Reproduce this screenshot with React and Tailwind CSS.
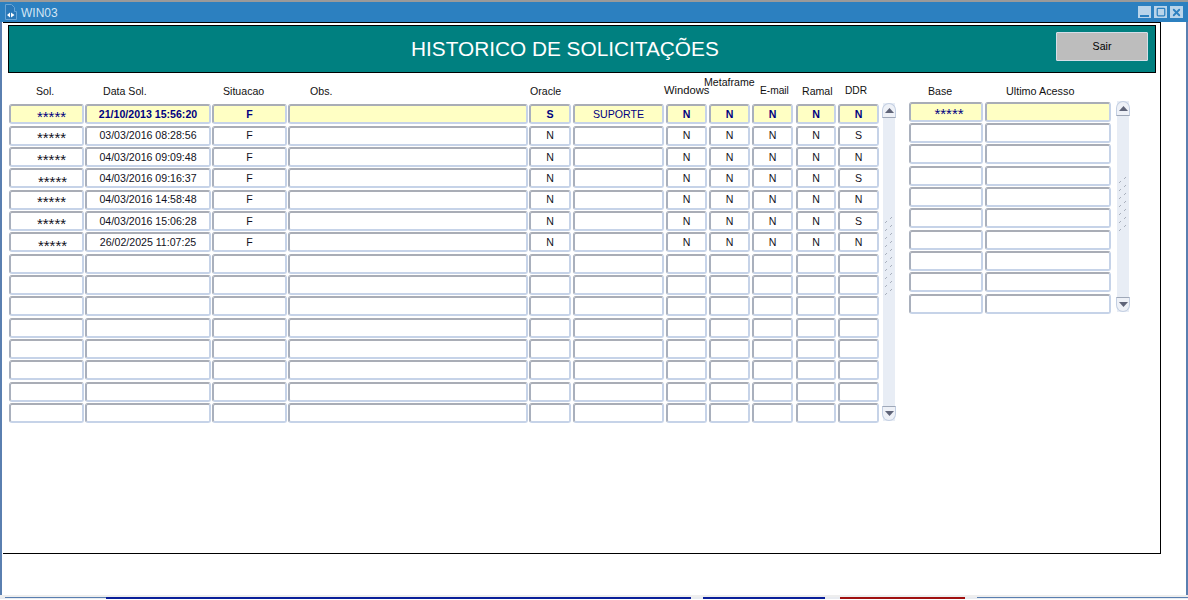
import React from "react";
import { Square, X } from "lucide-react";

const font = "font-['Liberation_Sans',Arial,sans-serif]";

// largura e margem de cada coluna da tabela principal
const colunas = [
  { w: "w-[75px]", ml: "ml-0" },
  { w: "w-[126px]", ml: "ml-[1px]" },
  { w: "w-[75px]", ml: "ml-[1px]" },
  { w: "w-[240px]", ml: "ml-[1px]" },
  { w: "w-[42px]", ml: "ml-[1px]" },
  { w: "w-[91px]", ml: "ml-[2px]" },
  { w: "w-[41px]", ml: "ml-[2px]" },
  { w: "w-[41px]", ml: "ml-[2px]" },
  { w: "w-[41px]", ml: "ml-[2px]" },
  { w: "w-[40px]", ml: "ml-[3px]" },
  { w: "w-[41px]", ml: "ml-[2px]" },
];

const dados = [
  ["*****", "21/10/2013 15:56:20", "F", "", "S", "SUPORTE", "N", "N", "N", "N", "N"],
  ["*****", "03/03/2016 08:28:56", "F", "", "N", "", "N", "N", "N", "N", "S"],
  ["*****", "04/03/2016 09:09:48", "F", "", "N", "", "N", "N", "N", "N", "N"],
  ["*****", "04/03/2016 09:16:37", "F", "", "N", "", "N", "N", "N", "N", "S"],
  ["*****", "04/03/2016 14:58:48", "F", "", "N", "", "N", "N", "N", "N", "N"],
  ["*****", "04/03/2016 15:06:28", "F", "", "N", "", "N", "N", "N", "N", "S"],
  ["*****", "26/02/2025 11:07:25", "F", "", "N", "", "N", "N", "N", "N", "N"],
];

const linhas = [...dados, ...Array(8).fill(Array(11).fill(""))];

const cabecalho = [
  { t: "Sol.", c: "w-[67px]" },
  { t: "Data Sol.", c: "w-[120px]" },
  { t: "Situacao", c: "w-[87px]" },
  { t: "Obs.", c: "w-[220px]" },
  { t: "Oracle", c: "w-[134px]" },
  { t: "Windows", c: "w-[40px] text-[11.2px]" },
  { t: "Metaframe", c: "w-[56px] mb-[9px]" },
  { t: "E-mail", c: "w-[42px] text-[10.2px]" },
  { t: "Ramal", c: "w-[43px]" },
  { t: "DDR", c: "w-[30px] text-[10.2px]" },
];

function Celula({ texto, selecionada, negrito, w, ml }) {
  return (
    <div
      className={`${w} ${ml} h-[20px] shrink-0 flex items-center justify-center rounded-[3px] border-2 border-t-[#a9adb6] border-l-[#a9b0bd] border-r-[#c6d3e8] border-b-[#c6d3e8] text-[10.6px] leading-none ${
        selecionada ? "bg-[#ffffc4] text-[#000080]" : "bg-white text-[#111122]"
      } ${negrito ? "font-bold" : ""}`}
    >
      {texto}
    </div>
  );
}

function Estrelas({ desloc }) {
  return <span className={`text-[15px] leading-none ${desloc}`}>*****</span>;
}

function BotaoScroll({ baixo }) {
  return (
    <div
      className={`w-[14px] h-[15px] -mx-[1px] shrink-0 flex items-center justify-center bg-[#eef1f7] border border-[#c3cfe2] ${
        baixo ? "rounded-b-[7px] border-t-[#9fa8b8]" : "rounded-t-[7px] border-b-[#9fa8b8]"
      }`}
    >
      <svg width="9" height="5" viewBox="0 0 9 5">
        <path d={baixo ? "M0 0h9L4.5 5z" : "M4.5 0L9 5H0z"} fill="#5f6478" />
      </svg>
    </div>
  );
}

// pontinhos do polegar da barra de rolagem
function Grip({ n }) {
  return (
    <div className="flex flex-col items-center">
      {Array.from({ length: n }).map((_, i) => (
        <svg key={i} width="8" height="8" viewBox="0 0 8 8" className="block">
          <path d="M6 0h1v1H6zM5 1h1v1H5zM1 4h1v1H1zM0 5h1v1H0z" fill="#a9b0bd" />
        </svg>
      ))}
    </div>
  );
}

function Scrollbar({ h, gripTop, n }) {
  return (
    <div className={`w-[12px] ${h} flex flex-col items-center bg-[#e8edf5]`}>
      <BotaoScroll />
      <div className={`flex-1 ${gripTop}`}>
        <Grip n={n} />
      </div>
      <BotaoScroll baixo />
    </div>
  );
}

export default function App() {
  return (
    <div className={`${font} relative w-[1188px] h-[600px] overflow-hidden bg-white text-black flex flex-col`}>
      <div className="h-[2px] bg-[#9a9a9a]" />
      <div className="h-[20px] bg-[#2c80c0] flex items-center pl-[5px] pr-[5px] text-white">
        <svg width="12" height="16" viewBox="0 0 12 16" className="mr-[4px]">
          <path d="M.5.5h6l3 3v4h2v8H.5z" fill="#2a78b8" stroke="#6aa5d6" />
          <path d="M2 11l3-2.5v5zM6 8.5l3.5 2.5L6 13.5z" fill="#fff" />
        </svg>
        <span className="text-[12px] leading-none pt-[1px] text-[#d3e5f5]">WIN03</span>
        <div className="ml-auto flex gap-[3px]">
          <div className="w-[13px] h-[12px] bg-[#b9d4ea] flex items-end justify-center pb-[1px]">
            <div className="w-[9px] h-[2px] bg-[#2c80c0]" />
          </div>
          <div className="w-[13px] h-[12px] bg-[#b9d4ea] flex items-center justify-center">
            <Square size={10} strokeWidth={3} className="text-[#2c80c0]" />
          </div>
          <div className="w-[13px] h-[12px] bg-[#b9d4ea] flex items-center justify-center">
            <X size={11} strokeWidth={4} className="text-[#2c80c0]" />
          </div>
        </div>
      </div>

      <div className="flex-1 border-x-2 border-x-[#5a7fb0] flex flex-col">
        <div className="ml-px w-[1158px] h-[532px] border-y border-r border-black pl-[5px] pt-[2px] flex flex-col">
          <div className="w-[1148px] h-[48px] shrink-0 border border-black bg-[#008080] flex items-center pr-[7px]">
            <h1 className="pl-[402px] text-[20.8px] font-normal text-white">HISTORICO DE SOLICITAÇÕES</h1>
            <button className="ml-auto self-start mt-[6px] w-[92px] h-[29px] bg-[#bdbdbd] border border-[#d5dee8] rounded-[1px] text-[10.6px] text-black">
              Sair
            </button>
          </div>

          <div className="flex pl-[1px]">
            <div className="w-[880px] shrink-0">
              <div className="h-[31.4px] flex items-end pb-[8px] pl-[27px] text-[10.6px] leading-none text-[#111]">
                {cabecalho.map((c, i) => (
                  <div key={i} className={`${c.c} shrink-0 whitespace-nowrap`}>
                    {c.t}
                  </div>
                ))}
              </div>
              <div className="flex">
                <div className="w-[870px] shrink-0">
                  {linhas.map((l, i) => (
                    <div key={i} className="flex h-[21.33px]">
                      {l.map((t, j) => (
                        <Celula
                          key={j}
                          texto={
                            j === 0 && t ? (
                              <Estrelas
                                desloc={
                                  i === 3 || i === 6
                                    ? "translate-x-[6px] translate-y-[3px]"
                                    : "translate-x-[5px] translate-y-[2px]"
                                }
                              />
                            ) : (
                              t
                            )
                          }
                          w={colunas[j].w}
                          ml={colunas[j].ml}
                          selecionada={i === 0}
                          negrito={i === 0 && j !== 0 && j !== 5}
                        />
                      ))}
                    </div>
                  ))}
                </div>
                <div className="ml-[4px] -mt-[1px]">
                  <Scrollbar h="h-[318px]" gripTop="pt-[99px]" n={10} />
                </div>
              </div>
            </div>

            <div className="ml-[20px]">
              <div className="h-[28.7px] flex items-end pb-[5px] pl-[19px] text-[10.6px] leading-none text-[#111]">
                <div className="w-[78px] shrink-0">Base</div>
                <div className="whitespace-nowrap text-[10.8px]">Ultimo Acesso</div>
              </div>
              <div className="flex">
                <div className="w-[202px]">
                  {Array.from({ length: 10 }).map((_, i) => (
                    <div key={i} className="flex h-[21.33px]">
                      <Celula
                        texto={i === 0 ? <Estrelas desloc="translate-x-[3px] translate-y-[2px]" /> : ""}
                        selecionada={i === 0}
                        w="w-[74px]"
                        ml="ml-0"
                      />
                      <Celula texto="" selecionada={i === 0} w="w-[126px]" ml="ml-[2px]" />
                    </div>
                  ))}
                </div>
                <div className="ml-[6px] -mt-[1px]">
                  <Scrollbar h="h-[211px]" gripTop="pt-[61px]" n={7} />
                </div>
              </div>
            </div>
          </div>
        </div>
      </div>

      <div className="h-[2px] bg-[#eeeeee]" />
      <div className="h-[2px] flex bg-[#e8ebf0]">
        <div className="w-[5px]" />
        <div className="w-[101px] h-[1px] bg-[#5a7fb0]" />
        <div className="w-[585px] bg-[#0a1f9a]" />
        <div className="w-[12px]" />
        <div className="w-[122px] bg-[#0a1f9a]" />
        <div className="w-[15px]" />
        <div className="w-[125px] bg-[#a01010]" />
        <div className="w-[12px]" />
        <div className="flex-1 h-[1px] bg-[#5a7fb0]" />
      </div>
      <div className="h-[1px] bg-white" />
    </div>
  );
}
